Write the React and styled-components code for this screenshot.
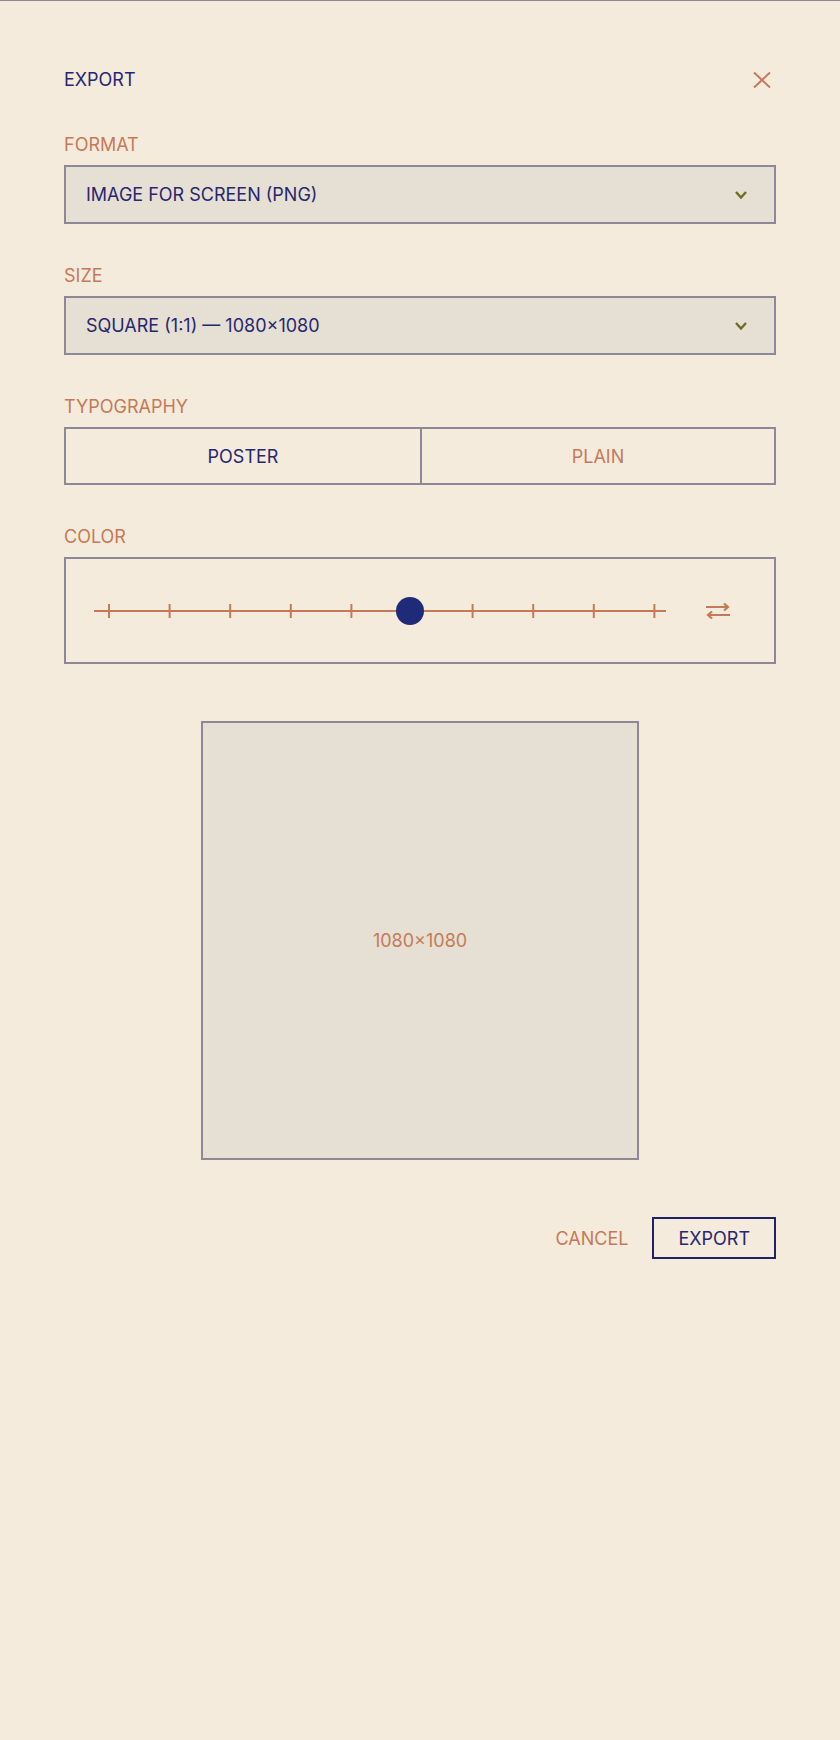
import React, { useState } from "react";
import styled, { createGlobalStyle } from "styled-components";

const GlobalStyle = createGlobalStyle`
  body {
    margin: 0;
    background: #f5ebdc;
    font-family: Inter, "Noto Sans", sans-serif;
  }
`;

const NAVY = "#26276f";
const ORANGE = "#c57a57";
const LINE = "#8d8798";
const FILL = "#e6dfd3";

const formats = ["IMAGE FOR SCREEN (PNG)"];
const sizes = ["SQUARE (1:1) — 1080×1080"];

const CloseIcon = () => (
  <svg width="18" height="16" viewBox="0 0 18 16" fill="none">
    <path d="M1 0.5 L17 15.5 M17 0.5 L1 15.5" stroke={ORANGE} strokeWidth="2" />
  </svg>
);

const Chevron = () => (
  <svg width="12" height="8" viewBox="0 0 12 8" fill="none">
    <path d="M1 1 L6 6.5 L11 1" stroke="#6f6b1f" strokeWidth="2.4" />
  </svg>
);

const SwapIcon = () => (
  <svg width="26" height="18" viewBox="0 0 26 18" fill="none">
    <path
      d="M1 5 H23 M19 1.5 L23 5 L19 8.5 M25 13 H3 M7 9.5 L3 13 L7 16.5"
      stroke={ORANGE}
      strokeWidth="2.2"
    />
  </svg>
);

const Track = ({ value }) => {
  const ticks = Array.from({ length: 10 }, (_, i) => 15 + i * 60.6);
  return (
    <svg width="572" height="30" viewBox="0 0 572 30">
      <line x1="0" y1="15" x2="572" y2="15" stroke={ORANGE} strokeWidth="2" />
      {ticks.map((x, i) =>
        i === value ? null : (
          <line key={i} x1={x} y1="8" x2={x} y2="22" stroke={ORANGE} strokeWidth="2" />
        )
      )}
      <circle cx={ticks[value] - 2} cy="15" r="14" fill="#1f2a78" />
    </svg>
  );
};

const App = () => {
  const [typo, setTypo] = useState("poster");

  return (
    <Page>
      <GlobalStyle />
      <Header>
        <Title>EXPORT</Title>
        <CloseButton>
          <CloseIcon />
        </CloseButton>
      </Header>

      <Form>
        <Field>
          <Label>FORMAT</Label>
          <Select>
            <span>{formats[0]}</span>
            <Chevron />
          </Select>
        </Field>

        <Field>
          <Label>SIZE</Label>
          <Select>
            <span>{sizes[0]}</span>
            <Chevron />
          </Select>
        </Field>

        <Field>
          <Label>TYPOGRAPHY</Label>
          <Segments>
            <Segment active={typo === "poster"} onClick={() => setTypo("poster")}>
              POSTER
            </Segment>
            <Segment active={typo === "plain"} onClick={() => setTypo("plain")}>
              PLAIN
            </Segment>
          </Segments>
        </Field>

        <Field>
          <Label>COLOR</Label>
          <ColorBox>
            <Track value={5} />
            <SwapButton>
              <SwapIcon />
            </SwapButton>
          </ColorBox>
        </Field>
      </Form>

      <PreviewWrap>
        <Preview>1080×1080</Preview>
      </PreviewWrap>

      <Actions>
        <CancelButton>CANCEL</CancelButton>
        <ExportButton>EXPORT</ExportButton>
      </Actions>
    </Page>
  );
};

export default App;

const Page = styled.div`
  min-height: 100vh;
  box-sizing: border-box;
  border-top: 1px solid #8c8a94;
  padding: 69px 64px 0;
`;

const Header = styled.div`
  display: flex;
  justify-content: space-between;
  align-items: center;
  height: 20px;
`;

const Title = styled.h1`
  margin: 0;
  font-size: 18px;
  font-weight: 400;
  line-height: 20px;
  color: ${NAVY};
`;

const CloseButton = styled.button`
  display: flex;
  padding: 0;
  margin-right: 5px;
  border: none;
  background: none;
  cursor: pointer;
`;

const Form = styled.div`
  display: flex;
  flex-direction: column;
  gap: 42px;
  margin-top: 45px;
`;

const Field = styled.div`
  display: flex;
  flex-direction: column;
  gap: 10px;
`;

const Label = styled.div`
  font-size: 18px;
  line-height: 20px;
  color: ${ORANGE};
`;

const Select = styled.div`
  display: flex;
  align-items: center;
  justify-content: space-between;
  box-sizing: border-box;
  height: 59px;
  padding: 0 27px 0 20px;
  border: 2px solid ${LINE};
  background: ${FILL};
  font-size: 18px;
  color: ${NAVY};
  cursor: pointer;
`;

const Segments = styled.div`
  display: grid;
  grid-template-columns: 1fr 1fr;
  box-sizing: border-box;
  height: 58px;
  border: 2px solid ${LINE};
`;

const Segment = styled.button`
  border: none;
  background: none;
  font-family: inherit;
  font-size: 18px;
  color: ${(p) => (p.active ? NAVY : ORANGE)};
  cursor: pointer;

  & + & {
    border-left: 2px solid ${LINE};
  }
`;

const ColorBox = styled.div`
  display: flex;
  align-items: center;
  justify-content: space-between;
  box-sizing: border-box;
  height: 107px;
  padding: 0 43px 0 28px;
  border: 2px solid ${LINE};
`;

const SwapButton = styled.button`
  display: flex;
  padding: 0;
  border: none;
  background: none;
  cursor: pointer;
`;

const PreviewWrap = styled.div`
  display: flex;
  justify-content: center;
  margin-top: 57px;
`;

const Preview = styled.div`
  display: flex;
  align-items: center;
  justify-content: center;
  box-sizing: border-box;
  width: 438px;
  height: 439px;
  border: 2px solid ${LINE};
  background: ${FILL};
  font-size: 18px;
  color: ${ORANGE};
`;

const Actions = styled.div`
  display: flex;
  justify-content: flex-end;
  align-items: center;
  margin-top: 57px;
`;

const CancelButton = styled.button`
  padding: 0 24px;
  border: none;
  background: none;
  font-family: inherit;
  font-size: 18px;
  color: ${ORANGE};
  cursor: pointer;
`;

const ExportButton = styled.button`
  box-sizing: border-box;
  height: 42px;
  padding: 0 24px;
  border: 2px solid #1f2266;
  background: none;
  font-family: inherit;
  font-size: 18px;
  color: ${NAVY};
  cursor: pointer;
`;
